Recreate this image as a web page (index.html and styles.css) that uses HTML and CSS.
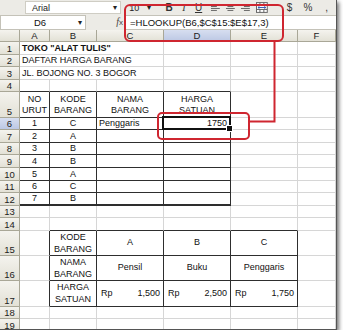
FILE: index.html
```html
<!DOCTYPE html>
<html>
<head>
<meta charset="utf-8">
<link rel="stylesheet" href="styles.css">
</head>
<body>
<div class="shot">
  <div class="toolbar">
    <div class="fontbox"><span class="fname">Arial</span><span class="dd">▾</span></div>
    <div class="sizebox"><span class="fsize">10</span><span class="dd">▾</span></div>
    <span class="tbtn tb-bold">B</span>
    <span class="tbtn tb-ital">I</span>
    <span class="tbtn tb-und">U</span>
    <svg class="ico" width="11" height="9" viewBox="0 0 11 9"><path d="M1 1.5h9M1 3.5h6M1 5.5h9M1 7.5h6" stroke="#666" stroke-width="1"/></svg>
    <svg class="ico" width="11" height="9" viewBox="0 0 11 9"><path d="M1 1.5h9M2.5 3.5h6M1 5.5h9M2.5 7.5h6" stroke="#666" stroke-width="1"/></svg>
    <svg class="ico" width="11" height="9" viewBox="0 0 11 9"><path d="M1 1.5h9M4 3.5h6M1 5.5h9M4 7.5h6" stroke="#666" stroke-width="1"/></svg>
    <svg class="ico merge" width="12" height="11" viewBox="0 0 12 11"><rect x="0.5" y="0.5" width="11" height="10" fill="#fff" stroke="#666"/><path d="M0.5 3.5h11M0.5 7.5h11M4 0.5v3M8 0.5v3M4 7.5v3M8 7.5v3" stroke="#666"/><path d="M2 5.5h8M2 5.5l1.5-1.2M2 5.5l1.5 1.2M10 5.5l-1.5-1.2M10 5.5l-1.5 1.2" stroke="#3a5fb0" fill="none"/></svg>
    <span class="tbtn sym dollar">$</span>
    <span class="tbtn sym">%</span>
    <span class="tbtn sym">,</span>
  </div>
  <div class="fbar">
    <div class="namebox"><span class="nm">D6</span><span class="dd">▾</span></div>
    <div class="fx"><i>f</i><span class="x">x</span></div>
    <div class="formula">=HLOOKUP(B6,$C$15:$E$17,3)</div>
  </div>
  <div class="sheet">
    <!-- column headers -->
    <div class="ch corner"></div><div class="ch">A</div><div class="ch">B</div><div class="ch">C</div><div class="ch sel">D</div><div class="ch">E</div><div class="ch">F</div>
    <!-- row 1 -->
    <div class="rh">1</div><div class="c span3 strong">TOKO "ALAT TULIS"</div><div class="c"></div><div class="c"></div><div class="c"></div>
    <!-- row 2 -->
    <div class="rh">2</div><div class="c span3">DAFTAR HARGA BARANG</div><div class="c"></div><div class="c"></div><div class="c"></div>
    <!-- row 3 -->
    <div class="rh">3</div><div class="c span3">JL. BOJONG NO. 3 BOGOR</div><div class="c"></div><div class="c"></div><div class="c"></div>
    <!-- row 4 -->
    <div class="rh">4</div><div class="c ttop"></div><div class="c ttop"></div><div class="c ttop"></div><div class="c ttop"></div><div class="c"></div><div class="c"></div>
    <!-- row 5 -->
    <div class="rh">5</div>
    <div class="c tb hdr"><span>NO</span><span>URUT</span></div>
    <div class="c tb hdr"><span>KODE</span><span>BARANG</span></div>
    <div class="c tb hdr"><span>NAMA</span><span>BARANG</span></div>
    <div class="c tb hdr"><span>HARGA</span><span>SATUAN</span></div>
    <div class="c"></div><div class="c"></div>
    <!-- row 6 -->
    <div class="rh sel">6</div><div class="c tb ctr">1</div><div class="c tb ctr">C</div><div class="c tb">Penggaris</div><div class="c tb rt active">1750</div><div class="c"></div><div class="c"></div>
    <!-- row 7 -->
    <div class="rh">7</div><div class="c tb ctr">2</div><div class="c tb ctr">A</div><div class="c tb"></div><div class="c tb"></div><div class="c"></div><div class="c"></div>
    <!-- row 8 -->
    <div class="rh">8</div><div class="c tb ctr">3</div><div class="c tb ctr">B</div><div class="c tb"></div><div class="c tb"></div><div class="c"></div><div class="c"></div>
    <!-- row 9 -->
    <div class="rh">9</div><div class="c tb ctr">4</div><div class="c tb ctr">B</div><div class="c tb"></div><div class="c tb"></div><div class="c"></div><div class="c"></div>
    <!-- row 10 -->
    <div class="rh">10</div><div class="c tb ctr">5</div><div class="c tb ctr">A</div><div class="c tb"></div><div class="c tb"></div><div class="c"></div><div class="c"></div>
    <!-- row 11 -->
    <div class="rh">11</div><div class="c tb ctr">6</div><div class="c tb ctr">C</div><div class="c tb"></div><div class="c tb"></div><div class="c"></div><div class="c"></div>
    <!-- row 12 -->
    <div class="rh">12</div><div class="c tb last ctr">7</div><div class="c tb last ctr">B</div><div class="c tb last"></div><div class="c tb last"></div><div class="c"></div><div class="c"></div>
    <!-- row 13 -->
    <div class="rh">13</div><div class="c"></div><div class="c"></div><div class="c"></div><div class="c"></div><div class="c"></div><div class="c"></div>
    <!-- row 14 -->
    <div class="rh">14</div><div class="c"></div><div class="c ttop"></div><div class="c ttop"></div><div class="c ttop"></div><div class="c ttop"></div><div class="c"></div>
    <!-- row 15 -->
    <div class="rh">15</div><div class="c tleft"></div>
    <div class="c tb two"><span>KODE</span><span>BARANG</span></div>
    <div class="c tb mid">A</div><div class="c tb mid">B</div><div class="c tb mid">C</div><div class="c"></div>
    <!-- row 16 -->
    <div class="rh">16</div><div class="c tleft"></div>
    <div class="c tb two"><span>NAMA</span><span>BARANG</span></div>
    <div class="c tb mid">Pensil</div><div class="c tb mid">Buku</div><div class="c tb mid">Penggaris</div><div class="c"></div>
    <!-- row 17 -->
    <div class="rh">17</div><div class="c tleft"></div>
    <div class="c tb two"><span>HARGA</span><span>SATUAN</span></div>
    <div class="c tb acc"><span>Rp</span><span>1,500</span></div>
    <div class="c tb acc"><span>Rp</span><span>2,500</span></div>
    <div class="c tb acc"><span>Rp</span><span>1,750</span></div>
    <div class="c"></div>
    <!-- row 18 -->
    <div class="rh">18</div><div class="c"></div><div class="c"></div><div class="c"></div><div class="c"></div><div class="c"></div><div class="c"></div>
    <!-- row 19 -->
    <div class="rh">19</div><div class="c"></div><div class="c"></div><div class="c"></div><div class="c"></div><div class="c"></div><div class="c"></div>
  </div>

  <div class="ann ann-formula"></div>
  <div class="ann ann-cell"></div>
  <svg class="connector" width="337" height="330" viewBox="0 0 337 330"><path d="M274.5 41 V121.5 H249" fill="none" stroke="#cf2630" stroke-width="2"/></svg>
</div>
</body>
</html>
```

FILE: styles.css
```css
* { box-sizing: border-box; margin: 0; padding: 0; }

body {
  background: #fff;
  font-family: "Liberation Sans", Arial, sans-serif;
  color: #111;
}

.shot {
  position: relative;
  width: 337px;
  height: 330px;
  overflow: hidden;
  background: #fff;
  border-right: 1px solid #555;
  border-bottom: 1px solid #555;
  box-shadow: 2px 2px 4px rgba(0, 0, 0, 0.55);
}

/* ---------- toolbar ---------- */
.toolbar {
  height: 15px;
  background: #ecebe6;
  display: flex;
  align-items: center;
  font-size: 9px;
  color: #222;
}

.fontbox {
  margin-left: 25px;
  width: 98px;
  height: 13px;
  background: #fff;
  border: 1px solid #cfcdc4;
  display: flex;
  align-items: center;
  padding-left: 6px;
}
.fname { flex: 1; }
.dd { font-size: 8px; width: 10px; text-align: center; color: #222; }

.sizebox {
  margin-left: 3px;
  width: 30px;
  height: 13px;
  display: flex;
  align-items: center;
  padding-left: 5px;
}
.fsize { flex: 1; }

.tbtn {
  width: 15px;
  text-align: center;
  font-size: 10px;
  color: #333;
}
.tb-bold { font-weight: bold; margin-left: 8px; }
.tb-ital { font-style: italic; font-family: "Liberation Serif", serif; }
.tb-und { text-decoration: underline; }
.ico { margin-left: 4px; }
.merge { margin-left: 6px; }
.sym { font-size: 10px; width: 19px; }
.dollar { margin-left: 12px; }

/* ---------- formula bar ---------- */
.fbar {
  height: 15px;
  display: flex;
  background: #ecebe6;
}
.namebox {
  width: 86px;
  background: #fff;
  border: 1px solid #c4c2b8;
  display: flex;
  align-items: center;
  font-size: 9.5px;
}
.nm { flex: 1; text-align: center; padding-left: 4px; }
.fx {
  width: 39px;
  text-align: right;
  padding-right: 2px;
  font-family: "Liberation Serif", serif;
  font-size: 10px;
  line-height: 14px;
  color: #444;
}
.fx .x { font-size: 8px; font-family: "Liberation Sans", sans-serif; }
.formula {
  flex: 1;
  background: #fff;
  border-top: 1px solid #c4c2b8;
  border-bottom: 1px solid #c4c2b8;
  padding-left: 5px;
  font-size: 9.5px;
  line-height: 13px;
}

/* ---------- sheet grid ---------- */
.sheet {
  display: grid;
  grid-template-columns: 20px 30px 47px 67px 67px 67px 1fr;
  grid-template-rows: 12px 13px 12px 13px 12px 26px 12px 13px 12px 13px 13px 12px 13px 12px 13px 25px 25px 26px 12px 13px;
  font-size: 9px;
}

.ch, .rh {
  background: linear-gradient(#f4f3ee, #e3e1d6);
  border-right: 1px solid #a9a797;
  border-bottom: 1px solid #a9a797;
  color: #222;
}
.ch {
  display: flex;
  align-items: center;
  justify-content: center;
  font-size: 9.5px;
}
.rh {
  display: flex;
  align-items: flex-end;
  justify-content: center;
  padding-bottom: 1px;
  font-size: 9.5px;
  line-height: 1;
}
.sel { background: linear-gradient(#d7def0, #bcc8e4); }

.c {
  border-right: 1px solid #d6d6d6;
  border-bottom: 1px solid #d6d6d6;
  display: flex;
  align-items: flex-end;
  padding: 0 2px 1px;
  line-height: 1;
  white-space: nowrap;
}
.span3 { grid-column: span 3; }
.strong { font-weight: bold; }
.ctr { justify-content: center; }
.rt { justify-content: flex-end; padding-right: 3px; }

.tb {
  border-right: 1px solid #2e2e2e;
  border-bottom: 1px solid #2e2e2e;
}
.tb.last { border-bottom: 2px solid #2e2e2e; }
.ttop { border-bottom: 1px solid #2e2e2e; }
.tleft { border-right: 1px solid #2e2e2e; }

.hdr {
  flex-direction: column;
  align-items: center;
  justify-content: flex-end;
  line-height: 11px;
  padding-bottom: 1px;
}
.two {
  flex-direction: column;
  align-items: center;
  justify-content: center;
  line-height: 12px;
}
.mid { justify-content: center; align-items: center; }
.acc {
  align-items: center;
  justify-content: space-between;
  padding: 0 3px 0 4px;
}

.active { position: relative; }
.active::after {
  content: "";
  position: absolute;
  left: -2px;
  top: -2px;
  right: -1px;
  bottom: -1px;
  border: 2px solid #111;
  z-index: 2;
}
.active::before {
  content: "";
  position: absolute;
  right: -3px;
  bottom: -3px;
  width: 5px;
  height: 5px;
  background: #111;
  border: 1px solid #fff;
  z-index: 3;
}

/* ---------- annotations ---------- */
.ann {
  position: absolute;
  border: 2px solid #cf2630;
  border-radius: 6px;
  z-index: 5;
}
.ann-formula { left: 124px; top: 4px; width: 160px; height: 38px; }
.ann-cell { left: 157px; top: 112px; width: 93px; height: 28px; border-radius: 5px; }
.connector { position: absolute; left: 0; top: 0; z-index: 5; }
```
